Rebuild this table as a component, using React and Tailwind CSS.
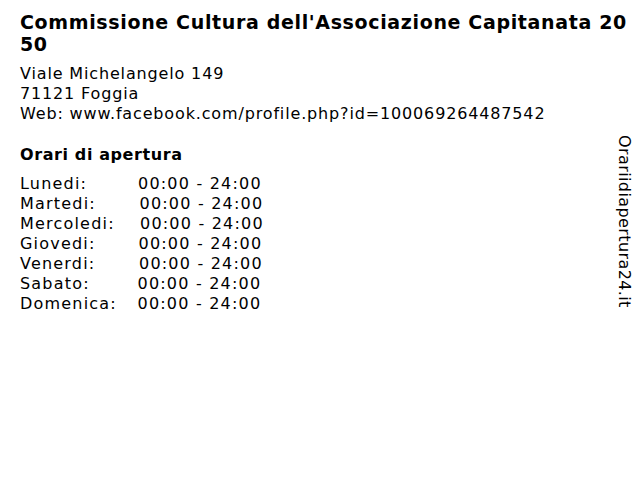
export default function App() {
  const days = [
    ["Lunedi:", "00:00 - 24:00", "ml-[0px]"],
    ["Martedi:", "00:00 - 24:00", "ml-[1.5px]"],
    ["Mercoledi:", "00:00 - 24:00", "ml-[2px]"],
    ["Giovedi:", "00:00 - 24:00", "ml-[0.5px]"],
    ["Venerdi:", "00:00 - 24:00", "ml-[1px]"],
    ["Sabato:", "00:00 - 24:00", "ml-[-0.5px]"],
    ["Domenica:", "00:00 - 24:00", "ml-[-0.5px]"],
  ];
  return (
    <div className="w-[640px] h-[480px] bg-white text-black" style={{ fontFamily: '"DejaVu Sans", sans-serif' }}>
      <h1 className="w-[632px] pl-[20px] pt-[11px] text-[19px] leading-[22px] font-bold tracking-[0.65px] break-all">
        Commissione Cultura dell'Associazione Capitanata 2050
      </h1>
      <div className="flex">
        <div className="w-[607px] pl-[20px]">
          <div className="mt-[9px] text-[16px] leading-[20px] tracking-[0.85px]">
            <div>Viale Michelangelo 149</div>
            <div>71121 Foggia</div>
            <div>Web: www.facebook.com/profile.php?id=100069264487542</div>
          </div>
          <h2 className="mt-[21px] text-[16px] leading-[20px] font-bold tracking-[0.6px]">Orari di apertura</h2>
          <div className="mt-[9px] grid grid-cols-[118px_auto] text-[16px] leading-[20px] tracking-[1.2px] w-fit">
            {days.map(([d, t, m]) => (
              <div key={d} className="contents">
                <div>{d}</div>
                <div className={m}>{t}</div>
              </div>
            ))}
          </div>
        </div>
        <div className="flex-1 pt-[80px] flex justify-center">
          <div className="text-[16px] leading-[20px] tracking-[0.4px] [writing-mode:vertical-rl]">Orariidiapertura24.it</div>
        </div>
      </div>
    </div>
  );
}
